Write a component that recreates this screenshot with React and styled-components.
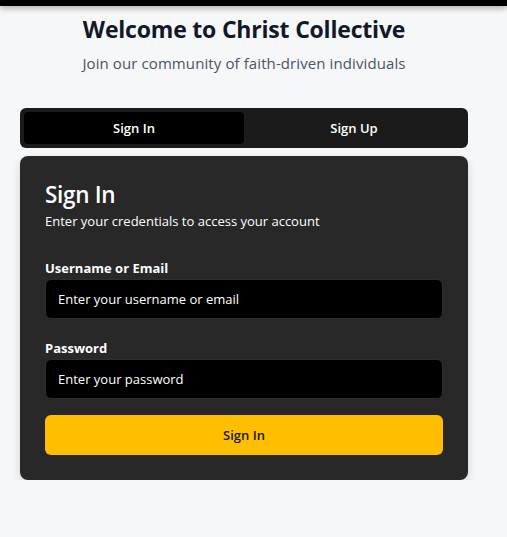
import styled, { createGlobalStyle } from "styled-components";

const GlobalStyle = createGlobalStyle`
  html, body {
    margin: 0;
    padding: 0;
    background: #f6f7f9;
    font-family: "Open Sans", "Noto Sans", sans-serif;
  }
  * { box-sizing: border-box; }
`;

const TopBar = styled.div`
  height: 6px;
  background: #000;
  box-shadow: 0 2px 6px rgba(0, 0, 0, 0.35);
`;

const Page = styled.main`
  width: 448px;
  margin-left: 20px;
  padding-top: 8px;
`;

const Hero = styled.header`
  text-align: center;
  margin-bottom: 34px;
`;

const Title = styled.h1`
  margin: 0;
  font-size: 23px;
  line-height: 30px;
  font-weight: 700;
  color: #111827;
  letter-spacing: -0.2px;
`;

const Subtitle = styled.p`
  margin: 8px 0 0;
  font-size: 15px;
  line-height: 22px;
  color: #4b5563;
  letter-spacing: 0.1px;
`;

const Tabs = styled.div`
  display: grid;
  grid-template-columns: 1fr 1fr;
  height: 40px;
  padding: 4px;
  background: #1b1b1b;
  border-radius: 6px;
`;

const Tab = styled.button`
  border: 0;
  border-radius: 4px;
  font-family: inherit;
  font-size: 13px;
  font-weight: 600;
  color: #fff;
  background: ${(p) => (p.$active ? "#000" : "transparent")};
  cursor: pointer;
`;

const Card = styled.section`
  margin-top: 8px;
  padding: 25px;
  background: #282828;
  border-radius: 8px;
  box-shadow: 0 4px 10px rgba(0, 0, 0, 0.15);
`;

const CardTitle = styled.h2`
  margin: 0;
  font-size: 22.5px;
  line-height: 28px;
  font-weight: 600;
  color: #fff;
  letter-spacing: -0.3px;
`;

const CardText = styled.p`
  margin: 2px 0 0;
  font-size: 13px;
  line-height: 20px;
  color: #fff;
`;

const Form = styled.form`
  display: flex;
  flex-direction: column;
  margin-top: 28px;
`;

const Field = styled.div`
  display: flex;
  flex-direction: column;
  gap: 2px;
  & + & { margin-top: 20px; }
`;

const Label = styled.label`
  font-size: 13px;
  line-height: 18px;
  font-weight: 700;
  color: #fff;
`;

const Input = styled.input`
  height: 40px;
  padding: 0 12px;
  background: #000;
  border: 1px solid #2e2e2e;
  border-radius: 6px;
  font-family: inherit;
  font-size: 13px;
  color: #fff;
  outline: none;
  &::placeholder { color: #fff; opacity: 1; }
`;

const Submit = styled.button`
  height: 40px;
  margin-top: 16px;
  border: 0;
  border-radius: 6px;
  background: #ffbf00;
  color: #1a1a1a;
  font-family: inherit;
  font-size: 13px;
  font-weight: 600;
  cursor: pointer;
`;

export default function App() {
  return (
    <>
      <GlobalStyle />
      <TopBar />
      <Page>
        <Hero>
          <Title>Welcome to Christ Collective</Title>
          <Subtitle>Join our community of faith-driven individuals</Subtitle>
        </Hero>
        <Tabs>
          <Tab $active>Sign In</Tab>
          <Tab>Sign Up</Tab>
        </Tabs>
        <Card>
          <CardTitle>Sign In</CardTitle>
          <CardText>Enter your credentials to access your account</CardText>
          <Form onSubmit={(e) => e.preventDefault()}>
            <Field>
              <Label htmlFor="user">Username or Email</Label>
              <Input id="user" placeholder="Enter your username or email" />
            </Field>
            <Field>
              <Label htmlFor="pass">Password</Label>
              <Input id="pass" type="password" placeholder="Enter your password" />
            </Field>
            <Submit type="submit">Sign In</Submit>
          </Form>
        </Card>
      </Page>
    </>
  );
}
